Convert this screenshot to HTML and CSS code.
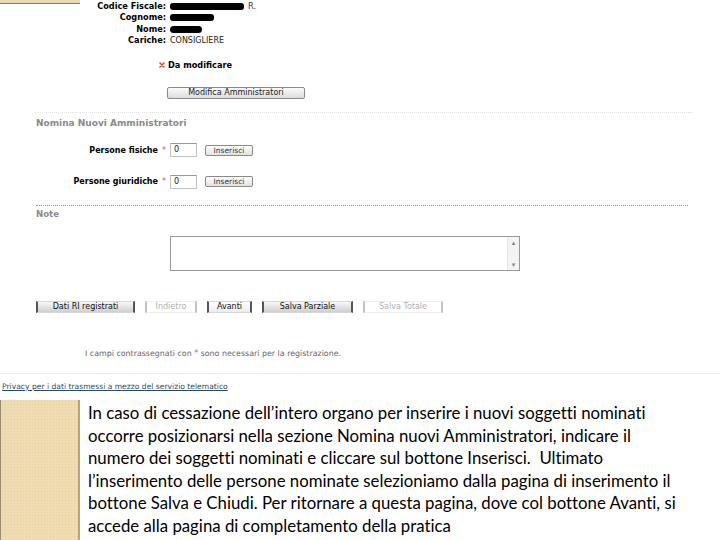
FILE: index.html
```html
<!DOCTYPE html>
<html lang="it">
<head>
<meta charset="utf-8">
<title>Nomina Amministratori</title>
<link rel="stylesheet" href="styles.css">
</head>
<body>
<div class="page">
  <div class="top">
    <div class="strip"></div>
    <div class="info">
      <span class="lbl">Codice Fiscale:</span><span class="val"><span class="redact r-cf"></span><span class="tail">R.</span></span>
      <span class="lbl">Cognome:</span><span class="val"><span class="redact r-cog"></span></span>
      <span class="lbl">Nome:</span><span class="val"><span class="redact r-nome"></span></span>
      <span class="lbl">Cariche:</span><span class="val plain">CONSIGLIERE</span>
    </div>
  </div>

  <div class="state">
    <svg class="xicon" viewBox="0 0 6 6" width="6" height="6"><path d="M1 1 L5 5 M5 1 L1 5" stroke="#d9463f" stroke-width="1.6" stroke-linecap="round"/></svg>
    <span>Da modificare</span>
  </div>

  <button class="btn-mod" type="button">Modifica Amministratori</button>

  <div class="rule faint"></div>

  <h2 class="section">Nomina Nuovi Amministratori</h2>

  <div class="frow first">
    <label class="flabel">Persone fisiche</label><span class="req">*</span><span class="field">0</span><button class="btn-ins" type="button">Inserisci</button>
  </div>
  <div class="frow second">
    <label class="flabel">Persone giuridiche</label><span class="req">*</span><span class="field">0</span><button class="btn-ins" type="button">Inserisci</button>
  </div>

  <div class="rule dotted"></div>

  <h2 class="section note-h">Note</h2>

  <div class="notes">
    <div class="ta"></div>
    <div class="sb"><span class="arr">&#9652;</span><span class="arr">&#9662;</span></div>
  </div>

  <div class="actions">
    <button class="act fill w-dati" type="button">Dati RI registrati</button>
    <button class="act off w-ind" type="button">Indietro</button>
    <button class="act light w-av" type="button">Avanti</button>
    <button class="act fill w-sp" type="button">Salva Parziale</button>
    <button class="act off w-st" type="button">Salva Totale</button>
  </div>

  <p class="foot">I campi contrassegnati con <span class="req">*</span> sono necessari per la registrazione.</p>

  <div class="rule light"></div>

  <a class="privacy" href="#">Privacy per i dati trasmessi a mezzo del servizio telematico</a>

  <div class="slide">
    <div class="tan"></div>
    <p class="caption">In caso di cessazione dell’intero organo per inserire i nuovi soggetti nominati<br>occorre posizionarsi nella sezione Nomina nuovi Amministratori, indicare il<br>numero dei soggetti nominati e cliccare sul bottone Inserisci.&nbsp; Ultimato<br>l’inserimento delle persone nominate selezioniamo dalla pagina di inserimento il<br>bottone Salva e Chiudi. Per ritornare a questa pagina, dove col bottone Avanti, si<br>accede alla pagina di completamento della pratica</p>
  </div>
</div>
</body>
</html>
```

FILE: styles.css
```css
* { box-sizing: border-box; }
html, body { margin: 0; padding: 0; background: #fff; }
body { width: 720px; height: 540px; overflow: hidden; font-family: "DejaVu Sans", Verdana, sans-serif; color: #111; }
.page { width: 720px; }

/* top info */
.top { display: flex; align-items: flex-start; height: 46.3px; }
.strip { width: 80px; height: 4px; flex: none; background: #e9d9b4; border-bottom: 1px solid #8c7a5a; }
.info { display: grid; grid-template-columns: 86px auto; column-gap: 4px; padding-top: 1px; font-size: 8.2px; line-height: 11.33px; }
.lbl { font-weight: bold; text-align: right; color: #000; }
.val { display: flex; align-items: center; }
.plain { color: #222; font-size: 8px; }
.redact { display: inline-block; height: 7px; background: #000; border-radius: 3px; }
.r-cf { width: 74px; }
.r-cog { width: 44px; }
.r-nome { width: 32px; border-radius: 4px; }
.tail { margin-left: 4px; color: #333; }

.state { margin-top: 13px; padding-left: 159px; display: flex; align-items: center; gap: 3px; font-size: 8.2px; font-weight: bold; line-height: 12px; color: #000; }
.xicon { display: block; }

.btn-mod { display: block; margin: 15.4px 0 0 167px; width: 138px; height: 12px; padding: 0; font: 8px "DejaVu Sans", sans-serif; color: #222; background: linear-gradient(#fbfbfb, #dcdcdc); border: 1px solid #8a8a8a; border-radius: 2px; line-height: 10px; }

.rule { height: 0; }
.rule.faint { margin: 13px 0 0 35px; width: 658px; border-top: 1px dotted #e2e2e2; }
.rule.dotted { margin: 16.3px 0 0 36px; width: 652px; border-top: 1px dotted #8f8f8f; }
.rule.light { margin-top: 13px; width: 720px; border-top: 1px solid #e8f1f5; }

.section { margin: 4px 0 0 36px; font-size: 9px; font-weight: bold; line-height: 12px; color: #8a8a8a; }
.note-h { margin-top: 2px; font-size: 8.6px; }

.frow { display: flex; align-items: center; height: 14px; }
.frow.first { margin-top: 14.5px; }
.frow.second { margin-top: 17.5px; }
.flabel { width: 158px; text-align: right; font-size: 8px; font-weight: bold; color: #000; }
.req { color: #e2554d; font-size: 8px; }
.frow .req { width: 12px; text-align: center; }
.field { width: 27px; height: 14px; border: 1px solid #c4c4c4; border-top-color: #9a9a9a; padding-left: 3px; font-size: 8px; line-height: 12px; color: #222; }
.btn-ins { margin-left: 8px; width: 48px; height: 11px; padding: 0; font: 7.5px "DejaVu Sans", sans-serif; color: #333; line-height: 9px; background: linear-gradient(#fdfdfd, #e2e2e2); border: 1px solid #8a8a8a; border-radius: 2px; }

.notes { display: flex; margin: 16px 0 0 170px; width: 350px; height: 35px; border: 1px solid #9a9a9a; }
.ta { flex: 1; background: #fff; }
.sb { width: 12px; background: #f3f3f3; border-left: 1px solid #e6e6e6; display: flex; flex-direction: column; justify-content: space-between; align-items: center; padding: 2px 0 1px; }
.arr { font-size: 7px; line-height: 8px; color: #888; }

.actions { display: flex; gap: 10px; margin: 30px 0 0 36px; height: 12px; }
.act { height: 12px; padding: 0; font: 8px "DejaVu Sans", sans-serif; line-height: 10px; border-top: 1px solid #d6d6d6; border-bottom: 1px solid #d6d6d6; border-left: 2px solid #555; border-right: 2px solid #555; }
.act.fill { background: linear-gradient(#f8f8f8, #cfcfcf); color: #111; }
.act.light { background: linear-gradient(#fff, #ececec); color: #111; }
.act.off { background: #fff; color: #b0b0b0; border-left-color: #c2c2c2; border-right-color: #c2c2c2; border-top-color: #eee; border-bottom-color: #eee; }
.w-dati { width: 99px; }
.w-ind { width: 52px; }
.w-av { width: 45px; }
.w-sp { width: 91px; }
.w-st { width: 80px; }

.foot { margin: 35px 0 0 85px; font-size: 7.9px; line-height: 12px; color: #666; }
.foot .req { font-size: 8px; }

.privacy { display: block; margin: 7px 0 0 2px; font-size: 7.6px; line-height: 12px; color: #2b4a66; text-decoration: underline; width: max-content; }

.slide { display: flex; margin-top: 7px; height: 140px; }
.tan { width: 80px; height: 140px; flex: none; background-color: #f0dcb3; background-image: radial-gradient(#e6cfa2 0.6px, transparent 0.8px); background-size: 3px 3px; border-left: 1px solid #9c8c70; border-right: 2px solid #bca47a; }
.caption { margin: 0 0 0 8px; padding-top: 2px; font-family: "Lato", "Open Sans", sans-serif; font-size: 16.8px; line-height: 22.6px; color: #000; white-space: nowrap; font-variant-ligatures: none; font-feature-settings: "liga" 0, "clig" 0, "dlig" 0; }
```
